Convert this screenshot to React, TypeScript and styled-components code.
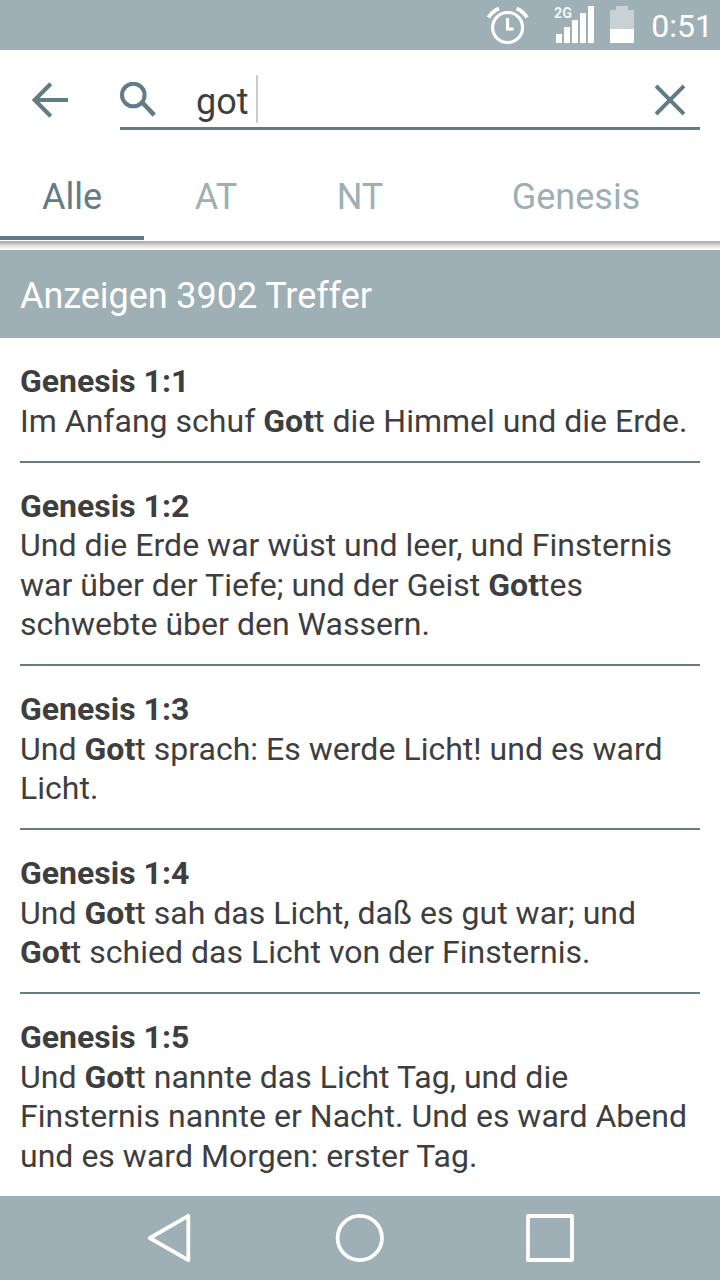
import React from "react";
import styled, { createGlobalStyle } from "styled-components";

const Global = createGlobalStyle`
  * { box-sizing: border-box; }
  body { margin: 0; background: #fff; font-family: Roboto, "Noto Sans", sans-serif; color: #3e3e3e; }
  h1, h2, p { margin: 0; font-weight: 400; }
  button { border: 0; padding: 0; background: none; font: inherit; color: inherit; }
`;

const Screen = styled.div`
  width: 720px;
  height: 1280px;
  display: flex;
  flex-direction: column;
  overflow: hidden;
`;

const StatusBar = styled.header`
  height: 50px;
  flex: none;
  display: flex;
  align-items: center;
  justify-content: flex-end;
  padding-right: 7px;
  background: #9eb0b5;
  color: #fff;
`;

const StatusIcons = styled.svg`
  width: 150px;
  height: 50px;
  margin-right: 16px;
`;

const Clock = styled.span`
  font-size: 32px;
  line-height: 50px;
  padding-top: 2px;
`;

const SearchBar = styled.div`
  height: 80px;
  flex: none;
  display: flex;
  padding-right: 20px;
  color: #617c85;
`;

const BackButton = styled.button`
  width: 120px;
  display: flex;
  align-items: flex-start;
  padding: 32px 0 0 32px;
`;

const Field = styled.div`
  flex: 1;
  display: flex;
  align-items: center;
  border-bottom: 3px solid #617c85;
  padding-top: 23px;
`;

const Query = styled.span`
  width: 55px;
  margin-left: 40px;
  padding-top: 4px;
  font-size: 36px;
  line-height: 48px;
  color: #3e3e3e;
`;

const Caret = styled.i`
  width: 2px;
  height: 48px;
  margin: 0 auto 2px 5px;
  background: #cbcdce;
`;

const ClearButton = styled.button`
  display: flex;
  margin-right: 15px;
`;

const Tabs = styled.nav`
  height: 120px;
  flex: none;
  display: flex;
  padding-top: 20px;
  background: linear-gradient(#fff 0 111px, #b3b0b0 111px, #b8b5b5 113px, #d9d7d7 115px, #f3f2f2 118px, #fff 119px);
`;

const Tab = styled.button<{ $active?: boolean; $width: number }>`
  width: ${(p) => p.$width}px;
  height: 90px;
  padding-top: 7px;
  font-size: 36px;
  color: ${(p) => (p.$active ? "#617c85" : "#9eb0b3")};
  border-bottom: 4px solid ${(p) => (p.$active ? "#617c85" : "transparent")};
`;

const Summary = styled.h1`
  height: 88px;
  flex: none;
  padding: 2px 20px 0;
  background: #9eb0b5;
  color: #fff;
  font-size: 36px;
  line-height: 88px;
  letter-spacing: -0.06px;
`;

const Results = styled.main`
  flex: 1;
  min-height: 0;
  padding: 0 20px;
`;

const Verse = styled.article`
  padding: 24px 0 19.5px;
  border-bottom: 2px solid #617c85;
  &:last-child { border-bottom: 0; }
`;

const Reference = styled.h2`
  font-size: 32px;
  line-height: 39.5px;
  font-weight: 700;
`;

const Line = styled.p`
  font-size: 32px;
  line-height: 39.5px;
  letter-spacing: 0.02px;
  white-space: nowrap;
`;

const NavBar = styled.footer`
  height: 84px;
  flex: none;
  background: #9eb0b5;
`;

const verses: { reference: string; lines: React.ReactNode[] }[] = [
  { reference: "Genesis 1:1", lines: [<>Im Anfang schuf <b>Got</b>t die Himmel und die Erde.</>] },
  {
    reference: "Genesis 1:2",
    lines: [
      "Und die Erde war wüst und leer, und Finsternis",
      <>war über der Tiefe; und der Geist <b>Got</b>tes</>,
      "schwebte über den Wassern.",
    ],
  },
  { reference: "Genesis 1:3", lines: [<>Und <b>Got</b>t sprach: Es werde Licht! und es ward</>, "Licht."] },
  {
    reference: "Genesis 1:4",
    lines: [
      <>Und <b>Got</b>t sah das Licht, daß es gut war; und</>,
      <><b>Got</b>t schied das Licht von der Finsternis.</>,
    ],
  },
  {
    reference: "Genesis 1:5",
    lines: [
      <>Und <b>Got</b>t nannte das Licht Tag, und die</>,
      "Finsternis nannte er Nacht. Und es ward Abend",
      "und es ward Morgen: erster Tag.",
    ],
  },
];

export default function App() {
  return (
    <Screen>
      <Global />
      <StatusBar>
        <StatusIcons viewBox="485 0 150 50" fill="none">
          <g stroke="#fff" strokeWidth="3.2">
            <circle cx="507.6" cy="27.5" r="15" />
            <path d="M507.5 18v11h6" />
            <path d="M488.5 17.5Q492 11.5 499 8.5M516.5 8.5Q523.5 11.5 527 17.5" strokeWidth="3.6" />
          </g>
          <path d="M556 34h6v9h-6zM564 27h6v16h-6zM572 20h6v23h-6zM580 13h6v30h-6zM588 6h6v37h-6z" fill="#fff" />
          <text x="554" y="18" fontSize="15" fontWeight="700" fill="#f1f6f8" textLength="18" lengthAdjust="spacingAndGlyphs">2G</text>
          <path d="M610 10h6V6h12v4h6v19h-24z" fill="#c7d1d6" />
          <path d="M610 29h24v14h-24z" fill="#fff" />
        </StatusIcons>
        <Clock>0:51</Clock>
      </StatusBar>
      <SearchBar>
        <BackButton aria-label="Back">
          <svg width="36" height="36" fill="none" stroke="currentColor" strokeWidth="4.2">
            <path d="M36 18H3M18.8 1.8L2.6 18l16.2 16.2" />
          </svg>
        </BackButton>
        <Field>
          <svg width="36" height="36" fill="none" stroke="currentColor">
            <circle cx="13.3" cy="13" r="11.3" strokeWidth="4" />
            <path d="M21.5 21.2h1.5L34.3 33.2" strokeWidth="4.6" />
          </svg>
          <Query>got</Query>
          <Caret />
          <ClearButton aria-label="Clear">
            <svg width="30" height="32" fill="none" stroke="currentColor" strokeWidth="4">
              <path d="M1 2l28 28M29 2L1 30" />
            </svg>
          </ClearButton>
        </Field>
      </SearchBar>
      <Tabs>
        <Tab $active $width={144}>Alle</Tab>
        <Tab $width={144}>AT</Tab>
        <Tab $width={144}>NT</Tab>
        <Tab $width={288}>Genesis</Tab>
      </Tabs>
      <Summary>Anzeigen 3902 Treffer</Summary>
      <Results>
        {verses.map((verse) => (
          <Verse key={verse.reference}>
            <Reference>{verse.reference}</Reference>
            {verse.lines.map((line, i) => <Line key={i}>{line}</Line>)}
          </Verse>
        ))}
      </Results>
      <NavBar>
        <svg width="720" height="84" fill="none" stroke="#fff" strokeWidth="3.8" strokeLinejoin="round">
          <path d="M188.3 19.8v44.4L149.8 42zM528 20h44v44h-44z" />
          <circle cx="359.8" cy="42" r="22.2" />
        </svg>
      </NavBar>
    </Screen>
  );
}
